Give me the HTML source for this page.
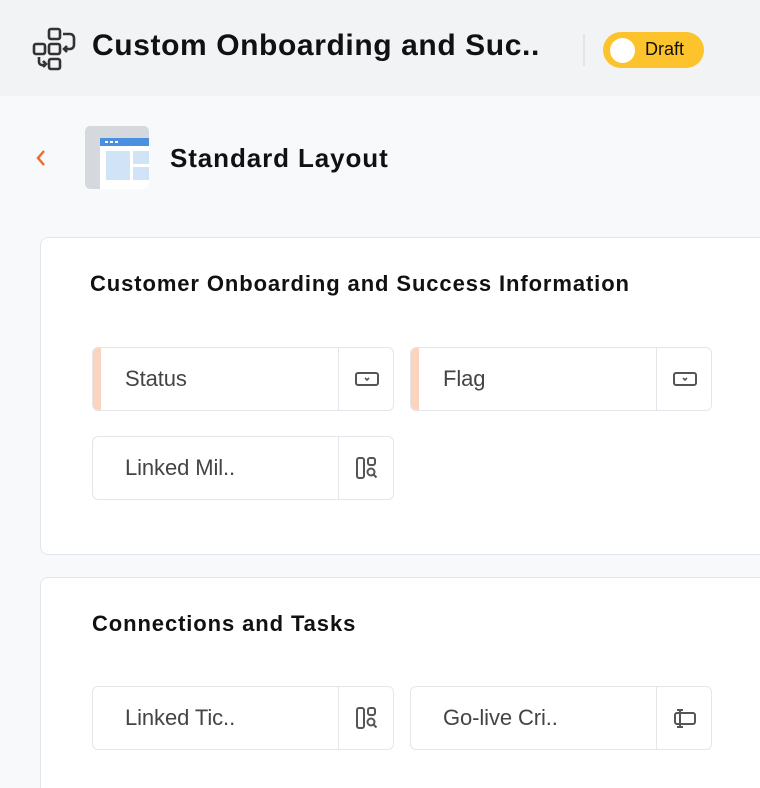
<!DOCTYPE html><html><head><style>
*{box-sizing:border-box;margin:0;padding:0}
html,body{width:760px;height:788px;overflow:hidden}
body{background:#f8f9fb;font-family:"Liberation Sans",sans-serif;position:relative}
.hdr{position:absolute;left:0;top:0;width:760px;height:96px;background:#f2f3f5}
.abs{position:absolute}
.card{position:absolute;left:40px;width:720px;background:#fff;border:1px solid #e3e6eb;border-right:none;border-radius:8px 0 0 8px}
.f{position:absolute;width:302px;height:64px;background:#fff;border:1px solid #e3e6eb;border-radius:6px;overflow:hidden}
.f .t{position:absolute;left:32px;top:0;line-height:62px;font-size:22px;color:#444;letter-spacing:-0.1px}
.f .d{position:absolute;left:245px;top:0;width:1px;height:64px;background:#e3e6eb}
.f .i{position:absolute;left:246px;top:0;width:56px;height:62px;display:flex;align-items:center;justify-content:center}
.f .m{position:absolute;left:0;top:0;width:8px;height:64px;background:#fcd3bf}
h3{position:absolute;font-size:22px;font-weight:bold;color:#111;letter-spacing:0.9px}
</style></head><body>
<div class="hdr"></div>
<svg class="abs" style="left:0;top:0" width="90" height="90" viewBox="0 0 90 90" fill="none" stroke="#333" stroke-width="2.6">
<rect x="49" y="29" width="11" height="10" rx="2"/><rect x="49" y="44" width="11" height="10" rx="2"/><rect x="49" y="59" width="11" height="10" rx="2"/>
<rect x="34" y="44" width="11" height="10" rx="2"/>
<path d="M63 34h7a4 4 0 0 1 4 4v7a4 4 0 0 1-4 4h-6"/><path d="M67 46l-3 3 3 3"/>
<path d="M39 57v5a3 3 0 0 0 3 3h4"/><path d="M43 61l3 3-3 3"/>
</svg>
<div class="abs" style="left:92px;top:29px;font-size:30px;font-weight:bold;color:#111;letter-spacing:0.6px">Custom Onboarding and Suc..</div>
<div class="abs" style="left:583px;top:34px;width:2px;height:32px;background:#e2e3e6"></div>
<div class="abs" style="left:603px;top:32px;width:101px;height:36px;border-radius:18px;background:#fcc32c"></div>
<div class="abs" style="left:610px;top:38px;width:25px;height:25px;border-radius:50%;background:#fff"></div>
<div class="abs" style="left:645px;top:39px;font-size:18px;color:#111">Draft</div>
<svg class="abs" style="left:33px;top:148px" width="16" height="20" viewBox="0 0 16 20"><path d="M11 3L5 10l6 7" fill="none" stroke="#f06a27" stroke-width="2.4"/></svg>
<div class="abs" style="left:85px;top:126px;width:64px;height:63px;background:#d5d8dd;border-radius:5px;overflow:hidden">
<div class="abs" style="left:15px;top:12px;width:49px;height:51px;background:#fff"></div>
<div class="abs" style="left:15px;top:12px;width:49px;height:8px;background:#4a8fe0"></div>
<div class="abs" style="left:20px;top:15px;width:3px;height:2px;background:#fff"></div><div class="abs" style="left:25px;top:15px;width:3px;height:2px;background:#fff"></div><div class="abs" style="left:30px;top:15px;width:3px;height:2px;background:#fff"></div>
<div class="abs" style="left:21px;top:25px;width:24px;height:29px;background:#d0e3f7"></div>
<div class="abs" style="left:48px;top:25px;width:16px;height:13px;background:#d0e3f7"></div>
<div class="abs" style="left:48px;top:41px;width:16px;height:13px;background:#d0e3f7"></div>
</div>
<div class="abs" style="left:170px;top:143px;font-size:26px;font-weight:bold;color:#111;letter-spacing:0.9px">Standard Layout</div>

<div class="card" style="top:237px;height:318px"></div>
<h3 style="left:90px;top:271px">Customer Onboarding and Success Information</h3>
<div class="card" style="top:577px;height:211px;border-bottom:none;border-radius:8px 0 0 0"></div>
<h3 style="left:92px;top:611px">Connections and Tasks</h3>

<svg width="0" height="0" style="position:absolute"><defs>
<g id="dd"><rect x="1" y="1" width="22" height="12" rx="2" fill="none" stroke="#555" stroke-width="2"/><path d="M10 6l2 2 2-2" fill="none" stroke="#555" stroke-width="1.6"/></g>
<g id="lk"><rect x="1" y="1" width="7" height="20" rx="2" fill="none" stroke="#555" stroke-width="2"/><rect x="12" y="1" width="7" height="7" rx="2" fill="none" stroke="#555" stroke-width="2"/><circle cx="15" cy="15" r="3.5" fill="none" stroke="#555" stroke-width="2"/><path d="M17.5 17.5l3 3" stroke="#555" stroke-width="2"/></g>
<g id="tx"><rect x="1" y="5" width="20" height="11" rx="2" fill="none" stroke="#555" stroke-width="2"/><path d="M6 2v17M3 2h6M3 19h6" stroke="#555" stroke-width="2"/></g>
</defs></svg>

<div class="f" style="left:92px;top:347px"><div class="m"></div><div class="t">Status</div><div class="d"></div><div class="i"><svg width="24" height="14"><use href="#dd"/></svg></div></div>
<div class="f" style="left:410px;top:347px"><div class="m"></div><div class="t">Flag</div><div class="d"></div><div class="i"><svg width="24" height="14"><use href="#dd"/></svg></div></div>
<div class="f" style="left:92px;top:436px"><div class="t">Linked Mil..</div><div class="d"></div><div class="i"><svg width="22" height="22"><use href="#lk"/></svg></div></div>
<div class="f" style="left:92px;top:686px"><div class="t">Linked Tic..</div><div class="d"></div><div class="i"><svg width="22" height="22"><use href="#lk"/></svg></div></div>
<div class="f" style="left:410px;top:686px"><div class="t">Go-live Cri..</div><div class="d"></div><div class="i"><svg width="22" height="21"><use href="#tx"/></svg></div></div>
</body></html>
